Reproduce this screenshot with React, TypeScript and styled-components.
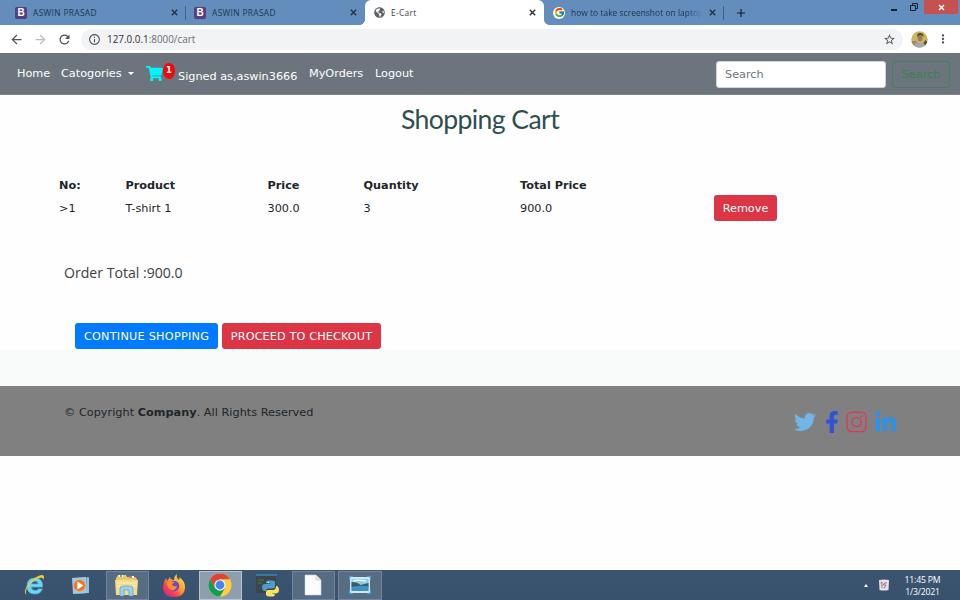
import React from "react";
import styled, { createGlobalStyle } from "styled-components";
import { FaTwitter, FaFacebookF, FaLinkedinIn, FaShoppingCart, FaGlobeAmericas } from "react-icons/fa";
import { FcGoogle } from "react-icons/fc";
import { MdStarBorder, MdInfoOutline, MdArrowBack, MdArrowForward, MdRefresh, MdMoreVert, MdAdd } from "react-icons/md";

const Global = createGlobalStyle`
  * { box-sizing: border-box; }
  body { margin: 0; background: #fff; overflow: hidden; }
  svg { display: block; flex: none; }
`;

const ui = `"Open Sans", "Noto Sans", sans-serif`;
const page = `"DejaVu Sans", Verdana, sans-serif`;

const Screen = styled.div`
  width: 960px;
  height: 600px;
  display: flex;
  flex-direction: column;
  background: #fefefe;
  font-family: ${page};
  font-size: 11.25px;
  color: #212529;
  white-space: nowrap;
`;

const TabStrip = styled.header`
  height: 25px;
  flex: none;
  display: flex;
  background: #628dbc;
  font-family: ${ui};
  font-size: 8.4px;
`;

const Tab = styled.div<{ $w: number; $active?: boolean; $divider?: boolean; $lead?: number }>`
  position: relative;
  width: ${(p) => p.$w}px;
  height: 25px;
  flex: none;
  display: flex;
  align-items: center;
  padding: 0 8px 0 ${(p) => p.$lead ?? 9}px;
  gap: 6px;
  color: ${(p) => (p.$active ? "#3c4043" : "#20364f")};
  background: ${(p) => (p.$active ? "#fff" : "transparent")};
  border-radius: ${(p) => (p.$active ? "6px 6px 0 0" : "0")};
  &::before {
    content: "";
    display: ${(p) => (p.$active ? "block" : "none")};
    position: absolute;
    left: -5px;
    right: -5px;
    bottom: 0;
    height: 5px;
    background:
      radial-gradient(circle at 0 0, transparent 4.5px, #fff 5px) left / 5px 5px no-repeat,
      radial-gradient(circle at 100% 0, transparent 4.5px, #fff 5px) right / 5px 5px no-repeat;
  }
  &::after {
    content: "";
    display: ${(p) => (p.$divider ? "block" : "none")};
    position: absolute;
    right: 0;
    top: 6px;
    width: 1px;
    height: 14px;
    background: #3f6186;
  }
`;

const TabTitle = styled.span<{ $fade?: boolean; $ls?: number }>`
  flex: 1;
  min-width: 0;
  overflow: hidden;
  line-height: 14px;
  letter-spacing: ${(p) => p.$ls ?? 0}px;
  mask-image: ${(p) => (p.$fade ? "linear-gradient(90deg, #000 88%, transparent)" : "none")};
`;

const BootstrapBadge = styled.span`
  width: 12px;
  height: 12px;
  border-radius: 2px;
  background: #563d7c;
  color: #fff;
  font: bold 10px/12px "Liberation Sans", sans-serif;
  text-align: center;
`;

const GoogleBadge = styled.span`
  width: 12px;
  height: 12px;
  border-radius: 50%;
  background: #fff;
  display: grid;
  place-items: center;
`;

const NewTab = styled.div`
  width: 33px;
  display: grid;
  place-items: center;
  color: #12202f;
`;

const WindowButtons = styled.div`
  margin-left: auto;
  display: flex;
  align-items: flex-start;
  padding-right: 2px;
`;

const WindowButton = styled.div<{ $close?: boolean; $w: number }>`
  width: ${(p) => p.$w}px;
  height: 14px;
  display: grid;
  place-items: center;
  color: ${(p) => (p.$close ? "#fff" : "#15202d")};
  background: ${(p) => (p.$close ? "#c75050" : "transparent")};
`;

const Toolbar = styled.div`
  height: 28px;
  flex: none;
  display: flex;
  align-items: center;
  background: #fff;
  color: #505458;
  padding: 0 9px;
`;

const ToolSlot = styled.div<{ $w: number; $dim?: boolean }>`
  width: ${(p) => p.$w}px;
  color: ${(p) => (p.$dim ? "#b9bbbe" : "#505458")};
`;

const AddressBar = styled.div`
  width: 822px;
  height: 21px;
  border-radius: 11px;
  background: #f1f3f4;
  display: flex;
  align-items: center;
  gap: 6px;
  padding: 0 7px;
  font-family: ${ui};
  font-size: 9.9px;
`;

const Url = styled.span`
  flex: 1;
  color: #6a6e72;
  b { font-weight: 400; color: #303236; }
`;

const Avatar = styled.div`
  margin-left: 8px;
  width: 25px;
`;

const Navbar = styled.nav`
  height: 42px;
  flex: none;
  display: flex;
  align-items: center;
  background: #6c757d;
  color: #fff;
  padding: 0 10px 0 17px;
  border-bottom: 1px solid #7b838a;
`;

const NavItem = styled.span<{ $w: number; $drop?: number }>`
  width: ${(p) => p.$w}px;
  padding-top: ${(p) => p.$drop ?? 0}px;
  line-height: 16px;
  display: flex;
  align-items: center;
`;

const Caret = styled.i`
  margin-left: 6px;
  border: 3.6px solid transparent;
  border-top-color: #fff;
  border-bottom: 0;
`;

const Cart = styled.span`
  position: relative;
  width: 32px;
  color: #00f6ff;
`;

const CartBadge = styled.span`
  position: absolute;
  left: 17px;
  top: -2px;
  width: 12px;
  height: 16px;
  border-radius: 50%;
  background: #f20808;
  color: #fff;
  font: bold 8.5px/15px "DejaVu Sans", sans-serif;
  text-align: center;
`;

const SearchInput = styled.div`
  margin-left: auto;
  margin-top: 1px;
  width: 170px;
  height: 27px;
  border-radius: 3px;
  border: 1px solid #ced4da;
  background: #fff;
  color: #6c757d;
  line-height: 26px;
  padding-left: 8px;
`;

const SearchButton = styled.div`
  margin-left: 6px;
  margin-top: 1px;
  width: 58px;
  height: 27px;
  border: 1px solid #45805a;
  border-radius: 3px;
  color: #388253;
  text-align: center;
  line-height: 26px;
`;

const Main = styled.main`
  height: 254px;
  flex: none;
  display: flex;
  flex-direction: column;
`;

const Title = styled.h2`
  margin: 8px 0 0;
  height: 33px;
  font: 400 26.6px/32px Lato, sans-serif;
  letter-spacing: -0.6px;
  color: #2f4f4f;
  text-align: center;
`;

const Table = styled.div`
  margin: 39px 0 0 59px;
  display: grid;
  grid-template-columns: 66.5px 142px 96px 156.5px 194px auto;
  grid-template-rows: 20px 26px;
  justify-content: start;
  align-items: center;
`;

const Head = styled.span`
  font-weight: 700;
  padding-top: 1px;
`;

const Cell = styled.span``;

const Button = styled.button<{ $tone: string; $w: number; $ls?: number }>`
  width: ${(p) => p.$w}px;
  height: 26px;
  border: 0;
  border-radius: 3px;
  padding: 0;
  background: ${(p) => p.$tone};
  color: #fff;
  font: 11.25px/27px ${page};
  letter-spacing: ${(p) => p.$ls ?? 0}px;
`;

const OrderTotal = styled.p`
  margin: 42px 0 0 64px;
  font: 14.1px/20px ${ui};
  color: #3b3e42;
`;

const Actions = styled.div`
  display: flex;
  gap: 4px;
  margin: 40px 0 0 75px;
`;

const Band = styled.div`
  height: 37px;
  flex: none;
  background: #f9fbfb;
`;

const Footer = styled.footer`
  height: 70px;
  flex: none;
  display: flex;
  justify-content: space-between;
  background: #808080;
  padding: 18px 62px 0 64px;
  line-height: 17px;
`;

const Copyright = styled.span`
  letter-spacing: 0.03px;
`;

const Socials = styled.div`
  display: flex;
  align-items: center;
  height: 24px;
  margin-top: 6px;
`;

const Social = styled.span<{ $c: string; $w: number }>`
  color: ${(p) => p.$c};
  width: ${(p) => p.$w}px;
`;

const Taskbar = styled.div`
  height: 30px;
  margin-top: auto;
  display: flex;
  align-items: stretch;
  padding-left: 13px;
  background: linear-gradient(#3b5470, #38526e);
  color: #fff;
  font-family: ${ui};
`;

const Task = styled.div<{ $w?: number; $state?: "open" | "active" }>`
  width: ${(p) => p.$w ?? 43}px;
  height: 29px;
  margin: 1px 3px 0 0;
  padding: 0 1px 1px 0;
  display: grid;
  place-items: center;
  border: 1px solid ${(p) => (p.$state === "active" ? "#b8c3cd" : p.$state ? "#71869a" : "transparent")};
  background: ${(p) => (p.$state === "active" ? "#8f9eac" : p.$state ? "#566c83" : "transparent")};
`;

const Tray = styled.div`
  margin-left: auto;
  display: flex;
  align-items: center;
  padding-right: 17px;
`;

const TrayArrow = styled.i`
  border: 2.5px solid transparent;
  border-bottom: 3px solid #fff;
  border-top: 0;
  margin-right: 10px;
`;

const Clock = styled.div`
  margin-left: 12px;
  width: 41px;
  font-size: 8.7px;
  line-height: 12.5px;
  letter-spacing: -0.2px;
  text-align: center;
  padding-top: 2px;
`;

const TabClose = () => (
  <svg width="7" height="7" viewBox="0 0 7 7">
    <path d="M.8.8l5.400 5.400M6.200.8L.8 6.200" stroke="#2a323c" strokeWidth="1.400" />
  </svg>
);

const InstagramIcon = () => (
  <svg width="21" height="22" viewBox="0 0 21 22" fill="none" stroke="#e8324f" strokeWidth="1.3">
    <rect x="1" y="1.2" width="19" height="19.4" rx="4.5" />
    <circle cx="10.5" cy="11" r="4.6" />
    <circle cx="15.6" cy="5.3" r=".5" />
  </svg>
);

const AvatarIcon = () => (
  <svg width="17" height="17" viewBox="0 0 17 17">
    <defs><clipPath id="face"><circle cx="8.5" cy="8.5" r="8.2" /></clipPath></defs>
    <g clipPath="url(#face)">
      <rect width="17" height="17" fill="#c4b95a" />
      <path d="M0 10h6v7H0z" fill="#9a8d62" />
      <path d="M3 17q0-6 5-6t6 6z" fill="#a9a7b2" />
      <ellipse cx="9" cy="6.800" rx="2.500" ry="3.400" fill="#a47763" />
      <path d="M6 6q0-4.500 3.500-4t3 4q-1-2-3-2t-3.500 2z" fill="#51463a" />
      <path d="M12.500 12l2-3 2 2-2 4z" fill="#544b48" />
    </g>
  </svg>
);

const IeIcon = () => (
  <svg width="24" height="24" viewBox="0 0 24 24">
    <path d="M20.500 14H9.200q.4 3.600 3.900 3.600 2.300 0 3.300-1.600h4q-1.700 5-7.600 5Q5 21 5 13t8-8q8 0 7.500 9zM9.300 11h6.900q-.3-2.900-3.300-2.900T9.300 11z" fill="#6fd5f7" stroke="#4bb4e3" strokeWidth=".8" />
    <path d="M4.600 21.700C-1 19 8 6.500 17 2.700c4.700-2 6 .2 4.300 4C21 3.500 16.600 4.300 11.500 8.200 5.700 12.600 2.200 18.700 4.600 21.700z" fill="#f4cb35" />
  </svg>
);

const MediaIcon = () => (
  <svg width="22" height="22" viewBox="0 0 22 22">
    <path d="M5 4l14-1v16L6 20z" fill="#5f9dc6" />
    <path d="M2 4l14-1 1 16-14 1z" fill="#9bcbe5" />
    <path d="M18 3.500v15.500" stroke="#c4e5f4" />
    <circle cx="9.500" cy="11.500" r="6" fill="#e7782c" stroke="#f9b281" strokeWidth=".7" />
    <path d="M7.400 7.500l6 4-6 4z" fill="#fff" />
  </svg>
);

const FolderIcon = () => (
  <svg width="26" height="24" viewBox="0 0 26 24">
    <path d="M2 5l2-3h8l1 2h8l2 2v3H2z" fill="#e3c86d" />
    <path d="M5 3h4M15 4h5" stroke="#fff" strokeWidth="2" />
    <path d="M6 3h2" stroke="#3d9b50" strokeWidth="1.500" />
    <path d="M15 4h3" stroke="#c84136" strokeWidth="1.500" />
    <path d="M1 7h23l-1 15H2z" fill="#f2dc8c" />
    <path d="M3 10h20M3 13h20" stroke="#fff0b7" />
    <path d="M6 23v-7q0-3 3-3h7q3 0 3 3v7h-4v-6h-5v6z" fill="#9bd1ee" stroke="#5c9fc4" strokeWidth=".7" />
  </svg>
);

const FirefoxIcon = () => (
  <svg width="24" height="25" viewBox="0 0 24 25">
    <defs>
      <linearGradient id="fox" x1=".9" y1=".1" x2=".2" y2=".9"><stop stopColor="#ffe34d" /><stop offset=".45" stopColor="#ff9b29" /><stop offset=".8" stopColor="#fa3b54" /><stop offset="1" stopColor="#d72c8b" /></linearGradient>
    </defs>
    <path d="M15 1q-1 4 2 6 1-2 0-3 6 4 6 10 0 10-11 10Q1 24 1 14q0-5 3-9l1 3 3-4q0 3 4 3 0-4 3-6z" fill="url(#fox)" />
    <circle cx="12" cy="13" r="5.300" fill="#7048c8" />
    <path d="M5 9q4-2 8 1-3 0-3 2 2 2 5 1-1 5-6 4-4-2-4-8z" fill="#ff8d30" />
  </svg>
);

const ChromeIcon = () => (
  <svg width="24" height="24" viewBox="0 0 24 24">
    <circle cx="12" cy="12" r="11.500" fill="#ffcd40" />
    <path d="M2.040 6.250A11.500 11.500 0 0 1 21.960 6.250H12L7 14.900z" fill="#db4437" />
    <path d="M2.040 6.250A11.500 11.500 0 0 0 12 23.500L17 14.900 12 17.750 7 14.900z" fill="#0f9d58" />
    <circle cx="12" cy="12" r="5.600" fill="#f2f2f2" />
    <circle cx="12" cy="12" r="4.400" fill="#4285f4" />
  </svg>
);

const PythonIcon = () => (
  <svg width="24" height="24" viewBox="0 0 24 24">
    <path d="M1 2h20v18H1z" fill="#3e4547" />
    <path d="M1 1h21v2H1z" fill="#3579a8" />
    <path d="M3 7h6M3 10h4" stroke="#3f8350" />
    <path d="M13 7.500h5q2 0 2 2v4q0 2-2 2h-5q-2 0-2 2.500H9q-2-1-2-4 0-3 3-3h5v-.8h-4V9.500q0-2 2-2z" fill="#4e9bd0" />
    <path d="M18 23.500h-4q-3 0-3-2.500v-2q0-2 2-2h5q3 0 3-4h1q2 1 2 4t-3 3.500h-4v.7h3q0 2.300-2 2.300z" fill="#ffe160" />
    <circle cx="13.200" cy="9.500" r=".7" fill="#fff" /><circle cx="17.500" cy="21.800" r=".7" fill="#fff" />
  </svg>
);

const FileIcon = () => (
  <svg width="18" height="22" viewBox="0 0 18 22">
    <path d="M1 1h11l5 5v15H1z" fill="#fcfcfc" stroke="#ccd2d7" strokeWidth=".6" />
    <path d="M12 1v5h5" fill="#e4e8eb" stroke="#b9c2ca" strokeWidth=".6" />
  </svg>
);

const PhotoIcon = () => (
  <svg width="22" height="18" viewBox="0 0 22 18">
    <path d="M0 4V0h4M18 0h4v4M0 14v4h4M18 18h4v-4" fill="none" stroke="#409dde" strokeWidth="2" />
    <rect x="1" y="1" width="20" height="16" rx="1" fill="#cfe6f3" />
    <rect x="2.500" y="3" width="17" height="12" fill="#8fc9eb" />
    <path d="M2.500 6q6 0 9 3l8-2v4h-17z" fill="#345f66" />
    <path d="M2.500 11q9-2 17-1v5h-17z" fill="#3f93bd" />
    <path d="M4 5q6-1.500 13 0" stroke="#e9f6fc" strokeWidth="1.500" fill="none" />
  </svg>
);

const TrayIcon = () => (
  <svg width="12" height="12" viewBox="0 0 12 12">
    <path d="M1 1q5-1 10 0l-.5 10q-4.500 1-9 0z" fill="#eddee8" />
    <path d="M2.500 4l1.500-1v6M9 3.500L6 4.500 5.500 6H8L6 9.500" stroke="#8d6684" strokeWidth=".9" fill="none" />
  </svg>
);

const products = [{ no: ">1", name: "T-shirt 1", price: "300.0", quantity: "3", total: "900.0" }];

export default function App() {
  return (
    <Screen>
      <Global />
      <TabStrip>
        <Tab $w={186} $lead={15} $divider>
          <BootstrapBadge>B</BootstrapBadge><TabTitle $ls={0.33}>ASWIN PRASAD</TabTitle><TabClose />
        </Tab>
        <Tab $w={179} $lead={8}>
          <BootstrapBadge>B</BootstrapBadge><TabTitle $ls={0.33}>ASWIN PRASAD</TabTitle><TabClose />
        </Tab>
        <Tab $w={179} $active>
          <FaGlobeAmericas size={11} color="#5f6368" /><TabTitle $ls={0.3}>E-Cart</TabTitle><TabClose />
        </Tab>
        <Tab $w={180} $divider>
          <GoogleBadge><FcGoogle size={11} /></GoogleBadge>
          <TabTitle $fade $ls={0.05}>how to take screenshot on laptop</TabTitle><TabClose />
        </Tab>
        <NewTab><MdAdd size={14} /></NewTab>
        <WindowButtons>
          <WindowButton $w={20}><svg width="6" height="12" viewBox="0 0 6 12"><path d="M0 9h6" stroke="currentColor" strokeWidth="2" /></svg></WindowButton>
          <WindowButton $w={20}><svg width="8" height="8" viewBox="0 0 8 8" fill="none" stroke="currentColor"><path d="M.5 2.500h5v5h-5zM2.500 2V.5h5v5H6" /></svg></WindowButton>
          <WindowButton $w={34} $close><svg width="7" height="7" viewBox="0 0 7 7"><path d="M1 1l5 5M6 1L1 6" stroke="currentColor" strokeWidth="1.500" /></svg></WindowButton>
        </WindowButtons>
      </TabStrip>
      <Toolbar>
        <ToolSlot $w={24}><MdArrowBack size={15} /></ToolSlot>
        <ToolSlot $w={24} $dim><MdArrowForward size={15} /></ToolSlot>
        <ToolSlot $w={24}><MdRefresh size={15} /></ToolSlot>
        <AddressBar>
          <MdInfoOutline size={13} />
          <Url><b>127.0.0.1</b>:8000/cart</Url>
          <MdStarBorder size={13} />
        </AddressBar>
        <Avatar><AvatarIcon /></Avatar>
        <MdMoreVert size={14} />
      </Toolbar>
      <Navbar>
        <NavItem $w={44}>Home</NavItem>
        <NavItem $w={85}>Catogories <Caret /></NavItem>
        <Cart><FaShoppingCart size={17} /><CartBadge>1</CartBadge></Cart>
        <NavItem $w={131} $drop={6}>Signed as,aswin3666</NavItem>
        <NavItem $w={66}>MyOrders</NavItem>
        <NavItem $w={60}>Logout</NavItem>
        <SearchInput>Search</SearchInput>
        <SearchButton>Search</SearchButton>
      </Navbar>
      <Main>
        <Title>Shopping Cart</Title>
        <Table>
          <Head>No:</Head><Head>Product</Head><Head>Price</Head><Head>Quantity</Head><Head>Total Price</Head><Head />
          {products.map((p) => (
            <React.Fragment key={p.no}>
              <Cell>{p.no}</Cell><Cell>{p.name}</Cell><Cell>{p.price}</Cell><Cell>{p.quantity}</Cell><Cell>{p.total}</Cell>
              <Button $tone="#dc3545" $w={63}>Remove</Button>
            </React.Fragment>
          ))}
        </Table>
        <OrderTotal>Order Total :900.0</OrderTotal>
        <Actions>
          <Button $tone="#007bff" $w={143} $ls={0.24}>CONTINUE SHOPPING</Button>
          <Button $tone="#dc3545" $w={159} $ls={0.12}>PROCEED TO CHECKOUT</Button>
        </Actions>
      </Main>
      <Band />
      <Footer>
        <Copyright>© Copyright <b>Company</b>. All Rights Reserved</Copyright>
        <Socials>
          <Social $c="#72b5e8" $w={27}><FaTwitter size={22} /></Social>
          <Social $c="#3153d2" $w={25}><FaFacebookF size={22} /></Social>
          <Social $c="#e8324f" $w={28}><InstagramIcon /></Social>
          <Social $c="#2494f0" $w={24}><FaLinkedinIn size={23} /></Social>
        </Socials>
      </Footer>
      <Taskbar>
        <Task><IeIcon /></Task>
        <Task $w={44}><MediaIcon /></Task>
        <Task $state="open"><FolderIcon /></Task>
        <Task $w={44}><FirefoxIcon /></Task>
        <Task $state="active"><ChromeIcon /></Task>
        <Task $w={44}><PythonIcon /></Task>
        <Task $state="open"><FileIcon /></Task>
        <Task $w={44} $state="open"><PhotoIcon /></Task>
        <Tray>
          <TrayArrow /><TrayIcon />
          <Clock>11:45 PM<br />1/3/2021</Clock>
        </Tray>
      </Taskbar>
    </Screen>
  );
}
